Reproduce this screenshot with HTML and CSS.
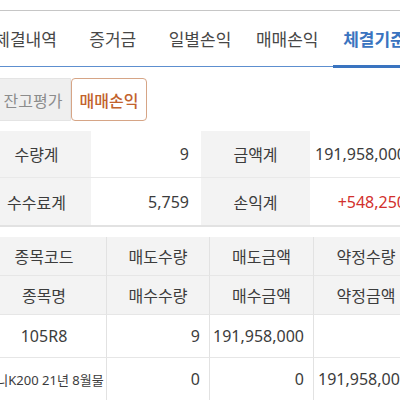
FILE: index.html
```html
<!DOCTYPE html>
<html lang="ko">
<head>
<meta charset="utf-8">
<title>체결기준</title>
<link rel="stylesheet" href="styles.css">
</head>
<body>
<div class="page">
  <nav class="tabs">
    <div class="tab">체결내역</div>
    <div class="tab">증거금</div>
    <div class="tab">일별손익</div>
    <div class="tab">매매손익</div>
    <div class="tab active">체결기준</div>
  </nav>

  <div class="seg">
    <div class="seg-btn">잔고평가</div>
    <div class="seg-btn on">매매손익</div>
  </div>

  <div class="summary">
    <div class="s-label">수량계</div>
    <div class="s-value">9</div>
    <div class="s-label">금액계</div>
    <div class="s-value">191,958,000</div>
    <div class="s-label last">수수료계</div>
    <div class="s-value last">5,759</div>
    <div class="s-label last">손익계</div>
    <div class="s-value last red">+548,250</div>
  </div>

  <div class="detail">
    <div class="h">종목코드</div>
    <div class="h">매도수량</div>
    <div class="h">매도금액</div>
    <div class="h">약정수량</div>
    <div class="h">종목명</div>
    <div class="h">매수수량</div>
    <div class="h">매수금액</div>
    <div class="h">약정금액</div>
    <div class="d c">105R8</div>
    <div class="d r">9</div>
    <div class="d r">191,958,000</div>
    <div class="d r"></div>
    <div class="d c small"><span>미니K200 21년 8월물</span></div>
    <div class="d r">0</div>
    <div class="d r">0</div>
    <div class="d r">191,958,000</div>
  </div>
</div>
</body>
</html>
```

FILE: styles.css
```css
html, body {
  margin: 0;
  padding: 0;
  background: #ffffff;
  overflow: hidden;
}

body {
  font-family: "Noto Sans", "Noto Sans CJK KR", sans-serif;
  color: #3c3c3c;
  padding-top: 10px;
}

.page {
  width: 436px;
  margin-left: -18px;
  border-top: 1px solid #c6c6c6;
}

.tabs {
  display: flex;
  height: 55px;
  border-bottom: 1px solid #5d8fcf;
}

.tab {
  flex: 1;
  display: flex;
  align-items: center;
  justify-content: center;
  font-size: 17px;
  color: #474747;
  position: relative;
}

.tab.active {
  color: #3a74c0;
  font-weight: 700;
}

.tab.active::after {
  content: "";
  position: absolute;
  left: 2px;
  right: 0;
  bottom: -2px;
  height: 3px;
  background: #3a74c0;
}

.seg {
  display: flex;
  margin: 11px 0 0 13px;
  height: 43px;
}

.seg-btn {
  width: 76px;
  display: flex;
  align-items: center;
  justify-content: center;
  font-size: 16px;
  box-sizing: border-box;
  color: #8c8c8c;
  background: #efefef;
  border: 1px solid #e4e4e4;
  border-radius: 4px 0 0 4px;
}

.seg-btn.on {
  color: #c2622c;
  font-weight: 500;
  background: #ffffff;
  border: 1px solid #d6a586;
  border-radius: 4px;
}

.summary {
  display: grid;
  grid-template-columns: 109px 110px 109px 108px;
  margin-top: 10px;
}

.s-label,
.s-value {
  height: 46px;
  display: flex;
  align-items: center;
  font-size: 16px;
  border-bottom: 1px solid #e9e9e9;
}

.s-label {
  background: #f3f3f3;
  justify-content: center;
}

.s-value {
  justify-content: flex-end;
  padding-right: 12px;
  font-size: 16px;
}

.s-label.last,
.s-value.last {
  height: 47px;
  border-bottom: 2px solid #e2e2e2;
}

.red {
  color: #d2302c;
}

.detail {
  display: grid;
  grid-template-columns: 125px 103px 104px 104px;
  margin-top: 10px;
}

.h,
.d {
  display: flex;
  align-items: center;
  border-right: 1px solid #e2e2e2;
  border-bottom: 1px solid #e6e6e6;
  white-space: nowrap;
}

.h:nth-child(4n),
.d:nth-child(4n) {
  border-right: none;
}

.h {
  height: 38px;
  background: #f3f3f3;
  justify-content: center;
  font-size: 16px;
}

.d {
  height: 42px;
  font-size: 16px;
}

.d.c {
  justify-content: center;
}

.d.r {
  justify-content: flex-end;
  padding-right: 9px;
}

.d.small {
  font-size: 13px;
}
```
